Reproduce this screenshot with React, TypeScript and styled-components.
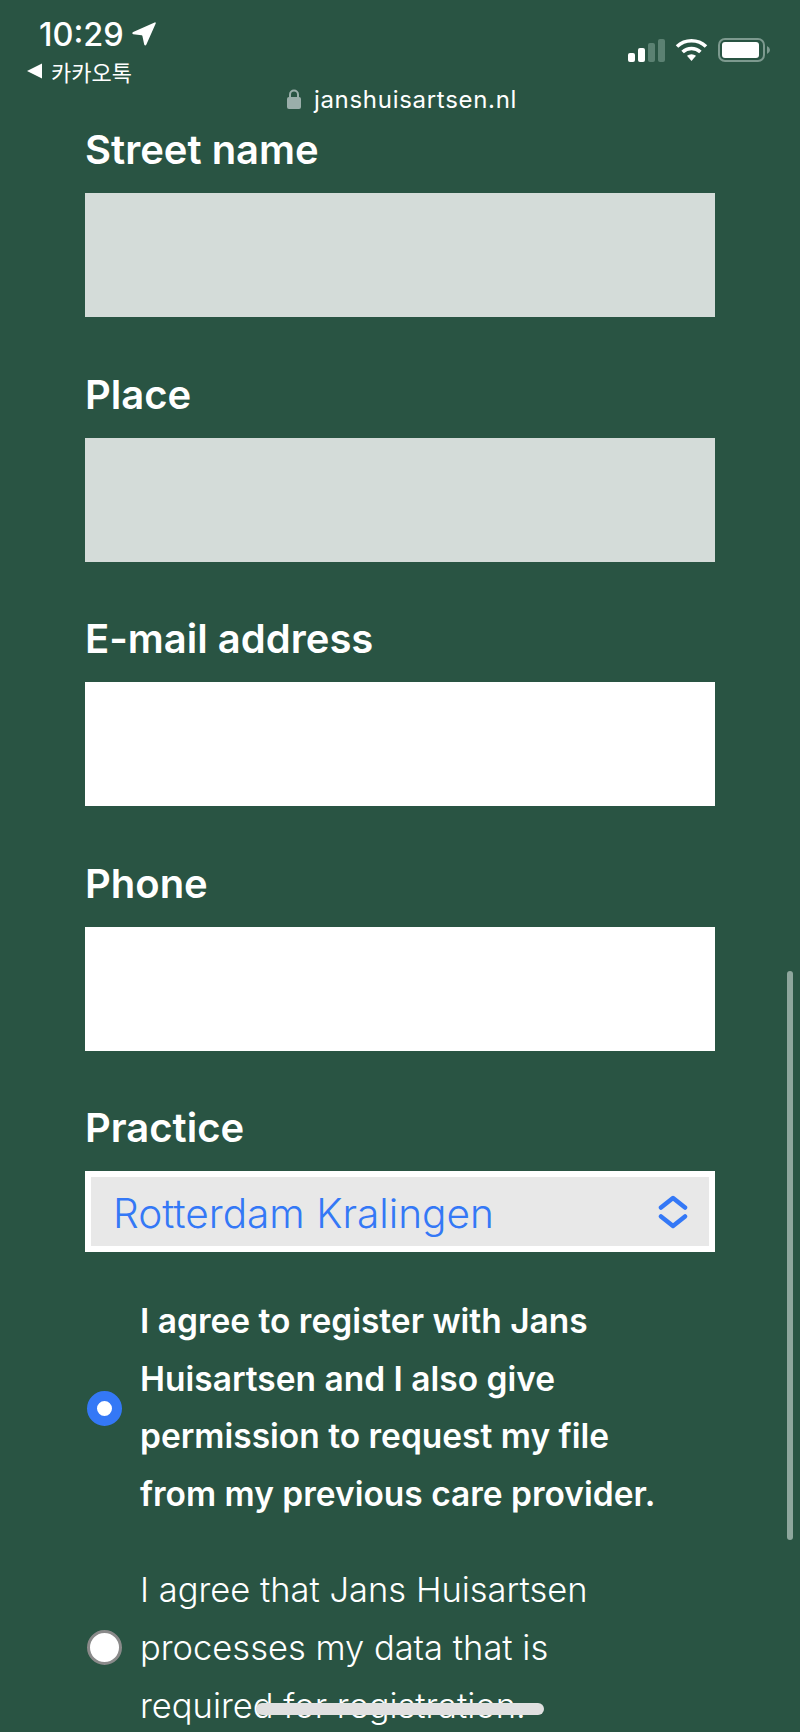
import React from "react";
import styled, { createGlobalStyle } from "styled-components";

const GlobalStyle = createGlobalStyle`
  html, body {
    margin: 0;
    padding: 0;
    background: #295443;
  }
  * {
    box-sizing: border-box;
  }
`;

const Page = styled.div`
  position: relative;
  width: 800px;
  height: 1732px;
  overflow: hidden;
  background: #295443;
  color: #fff;
  font-family: Inter, "Noto Sans", sans-serif;
`;

const StatusBar = styled.div`
  height: 84px;
  display: flex;
  justify-content: space-between;
  align-items: flex-start;
  padding: 17px 30px 0 27px;
`;

const StatusLeft = styled.div`
  display: flex;
  flex-direction: column;
`;

const TimeRow = styled.div`
  display: flex;
  align-items: center;
  gap: 8px;
  padding-left: 12px;
  height: 34px;
  font-size: 32.5px;
  font-weight: 500;
`;

const BackRow = styled.div`
  display: flex;
  align-items: center;
  gap: 8px;
  height: 40px;
  font-family: "Noto Sans CJK KR", sans-serif;
  font-size: 22px;
`;

const StatusRight = styled.div`
  display: flex;
  align-items: flex-end;
  gap: 10px;
  padding-top: 20px;
`;

const UrlRow = styled.div`
  display: flex;
  justify-content: center;
  align-items: center;
  gap: 13px;
  height: 30px;
  padding-left: 4px;
  font-size: 24px;
  letter-spacing: 0.7px;
`;

const Form = styled.div`
  display: flex;
  flex-direction: column;
  padding: 9px 85px 0;
`;

const Field = styled.div`
  display: flex;
  flex-direction: column;
  margin-bottom: 50.5px;
`;

const Label = styled.div`
  height: 70px;
  font-size: 40px;
  font-weight: 600;
  line-height: 48px;
  padding-top: 3px;
`;

const TextInput = styled.div<{ $disabled?: boolean }>`
  height: 124px;
  background: ${(p) => (p.$disabled ? "#d4dcd9" : "#fff")};
`;

const Select = styled.div`
  height: 81px;
  border: 6.5px solid #fff;
  background: #e8e8e8;
  color: #3478f6;
  display: flex;
  align-items: center;
  justify-content: space-between;
  padding: 0 21px 0 22px;
  font-size: 40.6px;
  font-weight: 300;
`;

const SelectLabel = styled.span`
  padding-top: 4px;
`;

const SelectField = styled(Field)`
  margin-bottom: 41px;
`;

const ConsentRow = styled.div`
  display: flex;
  align-items: center;
  gap: 18px;
  padding-left: 2px;
  margin-bottom: 38px;
`;

const Radio = styled.div<{ $checked?: boolean }>`
  flex: none;
  width: 35px;
  height: 35px;
  border-radius: 50%;
  background: #fff;
  border: ${(p) => (p.$checked ? "10px solid #3478f6" : "3px solid #8a8a8a")};
`;

const ConsentText = styled.div<{ $strong?: boolean }>`
  width: 535px;
  font-size: ${(p) => (p.$strong ? "33.5px" : "34.5px")};
  line-height: 57.6px;
  font-weight: ${(p) => (p.$strong ? 600 : 300)};
`;

const Scrollbar = styled.div`
  position: absolute;
  left: 787px;
  top: 971px;
  width: 6px;
  height: 569px;
  border-radius: 3px;
  background: #8ea69d;
`;

const HomeIndicator = styled.div`
  position: absolute;
  left: 256px;
  top: 1703px;
  width: 288px;
  height: 12px;
  border-radius: 6px;
  background: #e0e0e0;
`;

const LocationArrow = () => (
  <svg width="24" height="24" viewBox="0 0 24 24" fill="#fff">
    <path d="M22.6 0.4 Q24 0 23.7 1.6 L14.4 22.4 Q13.2 24.4 12.2 22.4 L10.4 14 Q10.3 13.3 9.6 13.2 L1.2 12.2 Q-0.6 11.2 1.2 10 Z" />
  </svg>
);

const BackArrow = () => (
  <svg width="16" height="16" viewBox="0 0 16 16" fill="#fff">
    <path d="M0 8 L15 0.5 V15.5 Z" />
  </svg>
);

const SignalIcon = () => (
  <svg width="37" height="24" viewBox="0 0 37 24">
    <rect x="0" y="15" width="7" height="9" rx="2" fill="#fff" />
    <rect x="10" y="10" width="7" height="14" rx="2" fill="#fff" />
    <rect x="20" y="5" width="7" height="19" rx="2" fill="#5b8172" />
    <rect x="30" y="1" width="7" height="23" rx="2" fill="#5b8172" />
  </svg>
);

const WifiIcon = () => (
  <svg width="33" height="25" viewBox="0 0 33 25" fill="none" stroke="#fff" strokeWidth="3.6">
    <path d="M2 9.5 A 21 21 0 0 1 31 9.5" />
    <path d="M7.6 15 A 13 13 0 0 1 25.4 15" />
    <path d="M12 18.8 A 7 7 0 0 1 21 18.8 L16.5 24 Z" fill="#fff" stroke="none" />
  </svg>
);

const BatteryIcon = () => (
  <svg width="52" height="24" viewBox="0 0 52 24">
    <rect x="1" y="1" width="45" height="22" rx="6" fill="none" stroke="#7d9a8f" strokeWidth="2" />
    <rect x="4" y="4" width="37" height="16" rx="3" fill="#fff" />
    <path d="M49 8 Q52 9.5 52 12 Q52 14.5 49 16 Z" fill="#7d9a8f" />
  </svg>
);

const LockIcon = () => (
  <svg width="14" height="20" viewBox="0 0 14 20">
    <path d="M3 9 V5.5 A4 4 0 0 1 11 5.5 V9" fill="none" stroke="#9aaeaa" strokeWidth="2" />
    <rect x="0" y="8" width="14" height="12" rx="2" fill="#9aaeaa" />
  </svg>
);

const SelectChevrons = () => (
  <svg width="30" height="34" viewBox="0 0 30 34" fill="none" stroke="#3478f6" strokeWidth="4.5" strokeLinecap="round" strokeLinejoin="round">
    <path d="M3 12.5 L15 3 L27 12.5" />
    <path d="M3 21.5 L15 31 L27 21.5" />
  </svg>
);

const fields = [
  { label: "Street name", disabled: true },
  { label: "Place", disabled: true },
  { label: "E-mail address", disabled: false },
  { label: "Phone", disabled: false },
];

export default function App() {
  return (
    <Page>
      <GlobalStyle />
      <StatusBar>
        <StatusLeft>
          <TimeRow>
            10:29
            <LocationArrow />
          </TimeRow>
          <BackRow>
            <BackArrow />
            카카오톡
          </BackRow>
        </StatusLeft>
        <StatusRight>
          <SignalIcon />
          <WifiIcon />
          <BatteryIcon />
        </StatusRight>
      </StatusBar>
      <UrlRow>
        <LockIcon />
        janshuisartsen.nl
      </UrlRow>
      <Form>
        {fields.map((f) => (
          <Field key={f.label}>
            <Label>{f.label}</Label>
            <TextInput $disabled={f.disabled} />
          </Field>
        ))}
        <SelectField>
          <Label>Practice</Label>
          <Select>
            <SelectLabel>Rotterdam Kralingen</SelectLabel>
            <SelectChevrons />
          </Select>
        </SelectField>
        <ConsentRow>
          <Radio $checked />
          <ConsentText $strong>
            I agree to register with Jans Huisartsen and I also give permission to request my file from my previous care provider.
          </ConsentText>
        </ConsentRow>
        <ConsentRow>
          <Radio />
          <ConsentText>
            I agree that Jans Huisartsen processes my data that is required for registration.
          </ConsentText>
        </ConsentRow>
      </Form>
      <Scrollbar />
      <HomeIndicator />
    </Page>
  );
}
